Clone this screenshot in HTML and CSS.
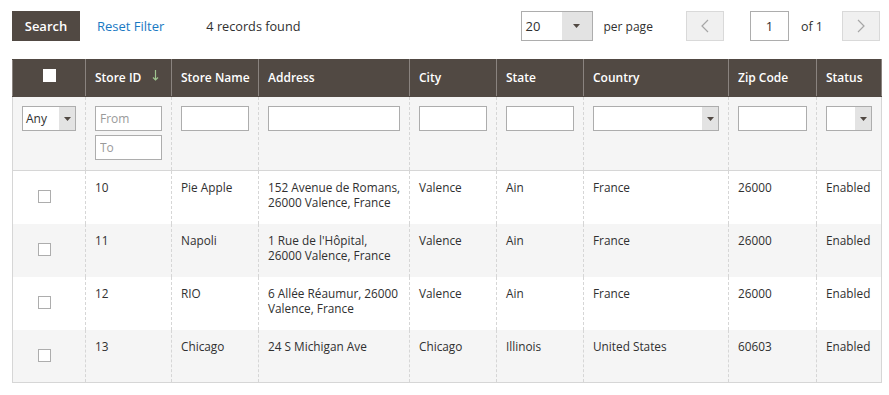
FILE: index.html
```html
<!DOCTYPE html>
<html lang="en">
<head>
    <meta charset="UTF-8">
    <title>Stores Grid</title>
    <link rel="stylesheet" href="styles.css">
</head>
<body>
    <div class="grid-wrap">
        <div class="toolbar">
            <button class="btn-search">Search</button>
            <a class="reset-link" href="#">Reset Filter</a>
            <span class="records">4 records found</span>

            <div class="pager">
                <div class="select limiter">
                    <span class="select-value">20</span>
                    <span class="select-btn"><svg width="7" height="4" viewBox="0 0 7 4"><path d="M0 0h7L3.5 4z" fill="#514943"/></svg></span>
                </div>
                <span class="per-page">per page</span>
                <button class="nav-btn prev"><svg width="8" height="14" viewBox="0 0 8 14"><path d="M7 1L1 7l6 6" fill="none" stroke="#a6a6a6" stroke-width="1.2"/></svg></button>
                <input class="page-input" type="text" value="1">
                <span class="page-total">of 1</span>
                <button class="nav-btn next"><svg width="8" height="14" viewBox="0 0 8 14"><path d="M1 1l6 6-6 6" fill="none" stroke="#a6a6a6" stroke-width="1.2"/></svg></button>
            </div>
        </div>

        <table class="data-grid">
            <colgroup>
                <col style="width: 73px">
                <col style="width: 86px">
                <col style="width: 87px">
                <col style="width: 151px">
                <col style="width: 87px">
                <col style="width: 87px">
                <col style="width: 145px">
                <col style="width: 88px">
                <col style="width: 65px">
            </colgroup>
            <thead>
                <tr>
                    <th class="col-check"><span class="head-check"></span></th>
                    <th class="sortable">Store ID <svg class="sort-arrow" width="7" height="11" viewBox="0 0 7 11"><path d="M3.5 0v10M1 7.5l2.5 2.5 2.5-2.5" fill="none" stroke="#9fc48f" stroke-width="1.2"/></svg></th>
                    <th>Store Name</th>
                    <th>Address</th>
                    <th>City</th>
                    <th>State</th>
                    <th>Country</th>
                    <th>Zip Code</th>
                    <th>Status</th>
                </tr>
                <tr class="filters">
                    <td class="filter-any">
                        <div class="select">
                            <span class="select-value">Any</span>
                            <span class="select-btn"><svg width="7" height="4" viewBox="0 0 7 4"><path d="M0 0h7L3.5 4z" fill="#514943"/></svg></span>
                        </div>
                    </td>
                    <td>
                        <input class="filter-input" type="text" placeholder="From">
                        <input class="filter-input range-to" type="text" placeholder="To">
                    </td>
                    <td><input class="filter-input" type="text"></td>
                    <td><input class="filter-input" type="text"></td>
                    <td><input class="filter-input" type="text"></td>
                    <td><input class="filter-input" type="text"></td>
                    <td>
                        <div class="select">
                            <span class="select-value"></span>
                            <span class="select-btn"><svg width="7" height="4" viewBox="0 0 7 4"><path d="M0 0h7L3.5 4z" fill="#514943"/></svg></span>
                        </div>
                    </td>
                    <td><input class="filter-input" type="text"></td>
                    <td>
                        <div class="select">
                            <span class="select-value"></span>
                            <span class="select-btn"><svg width="7" height="4" viewBox="0 0 7 4"><path d="M0 0h7L3.5 4z" fill="#514943"/></svg></span>
                        </div>
                    </td>
                </tr>
            </thead>
            <tbody>
                <tr>
                    <td class="col-check"><span class="row-check"></span></td>
                    <td>10</td>
                    <td>Pie Apple</td>
                    <td>152 Avenue de Romans, 26000 Valence, France</td>
                    <td>Valence</td>
                    <td>Ain</td>
                    <td>France</td>
                    <td>26000</td>
                    <td>Enabled</td>
                </tr>
                <tr>
                    <td class="col-check"><span class="row-check"></span></td>
                    <td>11</td>
                    <td>Napoli</td>
                    <td>1 Rue de l'Hôpital, 26000 Valence, France</td>
                    <td>Valence</td>
                    <td>Ain</td>
                    <td>France</td>
                    <td>26000</td>
                    <td>Enabled</td>
                </tr>
                <tr>
                    <td class="col-check"><span class="row-check"></span></td>
                    <td>12</td>
                    <td>RIO</td>
                    <td>6 Allée Réaumur, 26000 Valence, France</td>
                    <td>Valence</td>
                    <td>Ain</td>
                    <td>France</td>
                    <td>26000</td>
                    <td>Enabled</td>
                </tr>
                <tr>
                    <td class="col-check"><span class="row-check"></span></td>
                    <td>13</td>
                    <td>Chicago</td>
                    <td>24 S Michigan Ave</td>
                    <td>Chicago</td>
                    <td>Illinois</td>
                    <td>United States</td>
                    <td>60603</td>
                    <td>Enabled</td>
                </tr>
            </tbody>
        </table>
    </div>
</body>
</html>
```

FILE: styles.css
```css
* {
    margin: 0;
    padding: 0;
    box-sizing: border-box;
}

body {
    font-family: 'Open Sans', 'Liberation Sans', Arial, sans-serif;
    color: #303030;
    background: #fff;
}

.grid-wrap {
    padding: 11px 9px 0 12px;
}

/* Toolbar */
.toolbar {
    display: flex;
    align-items: center;
    height: 30px;
    margin-bottom: 18px;
}

.btn-search {
    height: 30px;
    width: 68px;
    background: #514943;
    color: #fff;
    border: none;
    font-family: inherit;
    font-size: 13px;
    font-weight: 600;
}

.reset-link {
    margin-left: 17px;
    color: #1979c3;
    font-size: 13px;
    text-decoration: none;
}

.records {
    margin-left: 42px;
    font-size: 12.7px;
    color: #303030;
}

.pager {
    margin-left: auto;
    display: flex;
    align-items: center;
}

.select {
    display: flex;
    height: 25px;
    border: 1px solid #adadad;
    background: #fff;
}

.select-value {
    flex-grow: 1;
    padding-left: 3px;
    font-size: 12px;
    line-height: 23px;
}

.select-btn {
    width: 16px;
    background: #e3e3e3;
    display: flex;
    align-items: center;
    justify-content: center;
}

.limiter {
    width: 72px;
    height: 30px;
}

.limiter .select-value {
    font-size: 13px;
    line-height: 28px;
    padding-left: 4px;
}

.limiter .select-btn {
    width: 30px;
}

.per-page {
    margin-left: 11px;
    font-size: 12px;
}

.nav-btn {
    width: 38px;
    height: 30px;
    background: #f0f0f0;
    border: 1px solid #d9d9d9;
    display: flex;
    align-items: center;
    justify-content: center;
}

.prev {
    margin-left: 33px;
}

.page-input {
    margin-left: 26px;
    width: 39px;
    height: 30px;
    border: 1px solid #adadad;
    text-align: center;
    font-family: inherit;
    font-size: 13px;
    color: #303030;
}

.page-total {
    margin-left: 12px;
    font-size: 12.5px;
}

.next {
    margin-left: 19px;
}

/* Grid */
.data-grid {
    width: 869px;
    table-layout: fixed;
    border-collapse: collapse;
    border: 1px solid #d6d6d6;
    font-size: 11.8px;
}

.data-grid th {
    background: #514943;
    color: #fff;
    font-size: 12px;
    font-weight: 600;
    text-align: left;
    line-height: 17px;
    padding: 9px 9px 10px;
    border-left: 1px solid #8a837f;
    border-right: 1px solid #8a837f;
    border-top: 1px solid #514943;
    border-bottom: 1px solid #514943;
    white-space: nowrap;
}

.data-grid th.col-check {
    text-align: center;
    padding: 0;
}

.head-check {
    display: inline-block;
    width: 13px;
    height: 13px;
    background: #fff;
    vertical-align: 2px;
}

.sort-arrow {
    margin-left: 8px;
    vertical-align: 1px;
}

.data-grid td {
    border-left: 1px dashed #d6d6d6;
    border-right: 1px dashed #d6d6d6;
    vertical-align: top;
    line-height: 15px;
    padding: 9px 5px 0 9px;
    color: #303030;
}

.filters td {
    background: #f5f5f5;
    padding: 9px 9px 10px;
    height: 74px;
    border-bottom: 1px solid #d6d6d6;
}

.filter-any {
    padding-right: 10px;
}

.filter-input {
    display: block;
    width: 100%;
    height: 25px;
    border: 1px solid #adadad;
    background: #fff;
    font-family: inherit;
    font-size: 12px;
    padding: 0 4px;
    color: #303030;
}

.filter-input::placeholder {
    color: #9a9a9a;
}

.range-to {
    margin-top: 4px;
}

tbody tr {
    height: 53px;
}

tbody tr:nth-child(even) td {
    background: #f5f5f5;
}

.data-grid td.col-check {
    padding: 19px 0 0 25px;
}

.row-check {
    display: block;
    width: 13px;
    height: 13px;
    border: 1px solid #adadad;
    background: #fff;
}
```
